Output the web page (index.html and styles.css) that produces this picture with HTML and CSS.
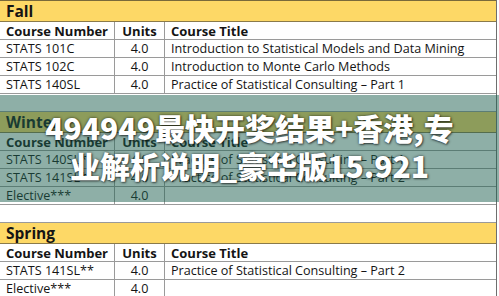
FILE: index.html
```html
<!DOCTYPE html>
<html>
<head>
<meta charset="utf-8">
<link rel="stylesheet" href="styles.css">
</head>
<body>
<div class="page">
  <div class="sheet">
    <div class="term first">Fall</div>
    <div class="row head"><div class="c1">Course Number</div><div class="c2">Units</div><div class="c3">Course Title</div></div>
    <div class="row"><div class="c1">STATS 101C</div><div class="c2">4.0</div><div class="c3">Introduction to Statistical Models and Data Mining</div></div>
    <div class="row"><div class="c1">STATS 102C</div><div class="c2">4.0</div><div class="c3">Introduction to Monte Carlo Methods</div></div>
    <div class="row"><div class="c1">STATS 140SL</div><div class="c2">4.0</div><div class="c3">Practice of Statistical Consulting – Part 1</div></div>
    <div class="blank"></div>
    <div class="term">Winter</div>
    <div class="row head"><div class="c1">Course Number</div><div class="c2">Units</div><div class="c3">Course Title</div></div>
    <div class="row"><div class="c1">STATS 140SL*</div><div class="c2">4.0</div><div class="c3">Practice of Statistical Consulting – Part 1</div></div>
    <div class="row"><div class="c1">STATS 141SL*</div><div class="c2">4.0</div><div class="c3">Practice of Statistical Consulting – Part 2</div></div>
    <div class="row"><div class="c1">Elective***</div><div class="c2">4.0</div><div class="c3"></div></div>
    <div class="blank"></div>
    <div class="term">Spring</div>
    <div class="row head"><div class="c1">Course Number</div><div class="c2">Units</div><div class="c3">Course Title</div></div>
    <div class="row"><div class="c1">STATS 141SL**</div><div class="c2">4.0</div><div class="c3">Practice of Statistical Consulting – Part 2</div></div>
    <div class="row"><div class="c1">Elective***</div><div class="c2">4.0</div><div class="c3"></div></div>
  </div>
  <div class="overlay">
    <p class="headline">494949最快开奖结果+香港,专<br>业解析说明_豪华版15.921</p>
  </div>
</div>
</body>
</html>
```

FILE: styles.css
```css
html, body {
  margin: 0;
  padding: 0;
  background: #ffffff;
}
.page {
  position: relative;
  width: 499px;
  height: 296px;
  overflow: hidden;
  font-family: "Open Sans", "Noto Sans", sans-serif;
  color: #141414;
}
.sheet {
  width: 496px;
  border-right: 1px solid #6e6e6e;
}
.term {
  height: 20px;
  background: #fdd866;
  border-bottom: 1px solid #8a7a4a;
  font-weight: 700;
  font-size: 15.5px;
  line-height: 21px;
  padding-left: 6px;
}
.term.first {
  border-top: 1px solid #7a6a3a;
}
.row {
  display: grid;
  grid-template-columns: 115px 50px 1fr;
  height: 17px;
  border-bottom: 1px solid #9a9a9a;
  font-size: 12.6px;
  line-height: 18px;
}
.row > div {
  white-space: nowrap;
  overflow: hidden;
}
.c1 {
  padding-left: 6px;
  border-right: 1px solid #9a9a9a;
}
.c2 {
  text-align: center;
  border-right: 1px solid #9a9a9a;
}
.c3 {
  padding-left: 6px;
}
.head {
  font-weight: 700;
  font-size: 13px;
}
.blank {
  height: 17px;
  border-bottom: 1px solid #9a9a9a;
}
.overlay {
  position: absolute;
  left: 0;
  top: 95px;
  width: 499px;
  height: 107px;
  background: rgba(30, 95, 80, 0.5);
  display: flex;
  align-items: center;
  justify-content: center;
}
.headline {
  margin: 0 0 6px 0;
  text-align: center;
  color: #ffffff;
  font-family: "Noto Sans CJK SC", "Noto Sans", sans-serif;
  font-weight: 900;
  font-size: 30px;
  line-height: 38px;
  text-shadow: 0 0 3px rgba(0,0,0,0.6), 1px 1px 2px rgba(0,0,0,0.5);
}
```
